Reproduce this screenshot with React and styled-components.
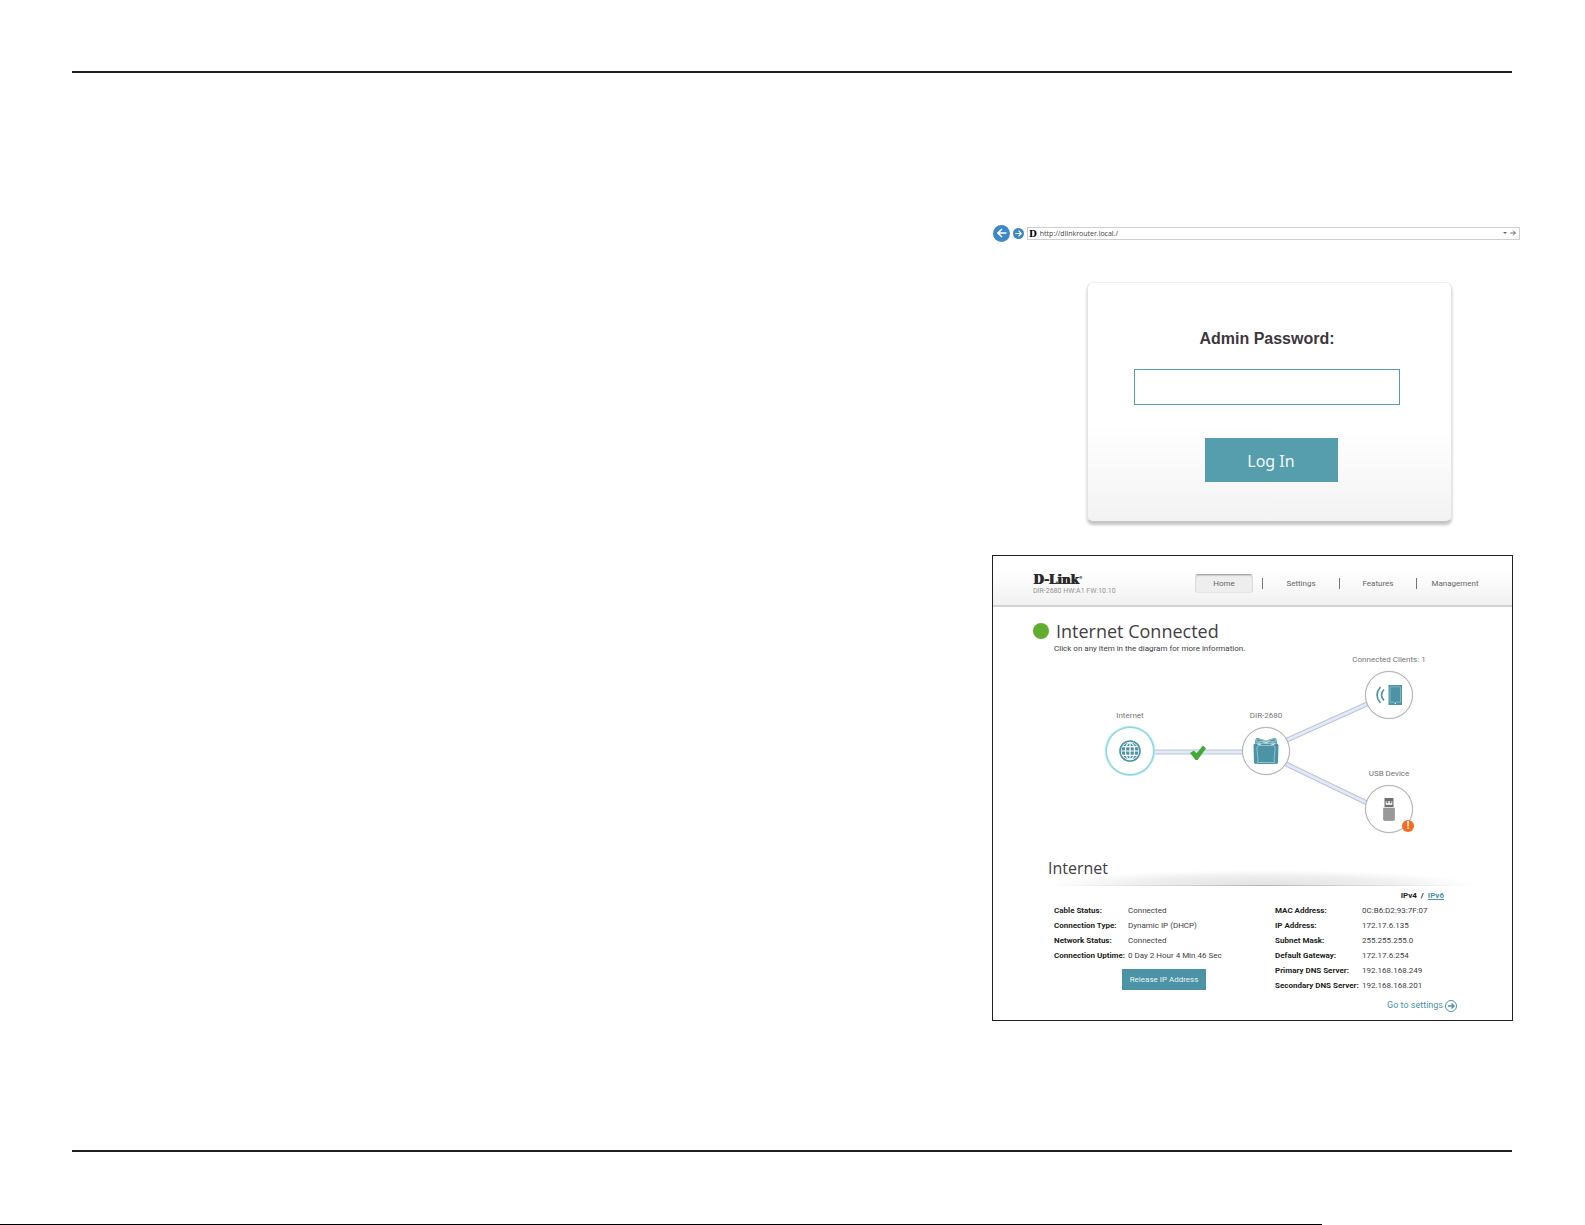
import React from 'react';
import styled, { createGlobalStyle, css } from 'styled-components';

const colors = {
  teal: '#4b93a5',
  tealLight: '#569dad',
  ink: '#231f20',
  text: '#454045',
  muted: '#77757a',
  edge: '#e3e9f5',
  edgeLine: '#bcc5de',
};

const GlobalStyle = createGlobalStyle`
  *, *::before, *::after {
    box-sizing: border-box;
  }

  body {
    margin: 0;
    background: #fff;
    color: ${colors.text};
    font-family: Roboto, 'Liberation Sans', sans-serif;
    font-size: 8px;
  }

  button, input {
    font: inherit;
    color: inherit;
  }
`;

const Sheet = styled.div`
  display: flex;
  flex-direction: column;
  min-height: 100vh;
  padding-top: 71px;
`;

const Rule = styled.hr`
  height: 2px;
  margin: 0 73px 0 72px;
  border: 0;
  background: ${colors.ink};
`;

const Content = styled.main`
  flex: 1;
  display: flex;
  flex-direction: column;
  align-items: flex-end;
  padding: 151px 65px 40px;
`;

const Figures = styled.div`
  display: flex;
  flex-direction: column;
  width: 100%;
  max-width: 528px;
`;

const PageEdge = styled.footer`
  display: flex;
  height: 1px;
  margin-top: 72px;
`;

const EdgeLine = styled.div`
  width: 83.4%;
  background: #000;
`;

/* Address bar */

const AddressBar = styled.form`
  display: flex;
  align-items: center;
  gap: 3px;
  height: 18px;
  padding-left: 1px;
`;

const RoundButton = styled.button`
  display: grid;
  flex: none;
  place-items: center;
  width: ${({ $size }) => $size}px;
  height: ${({ $size }) => $size}px;
  padding: 0;
  border: 0;
  border-radius: 50%;
  background: #3b87c8;
  color: #fff;
`;

const UrlBox = styled.div`
  flex: 1;
  display: flex;
  align-items: center;
  gap: 3px;
  height: 13px;
  padding: 0 3px 0 1px;
  border: 1px solid #d0d0d0;
`;

const Favicon = styled.span`
  padding-top: 2px;
  color: #000;
  font: 900 9px/9px 'DejaVu Serif', serif;
`;

const UrlInput = styled.input`
  flex: 1;
  min-width: 0;
  height: 11px;
  padding: 0;
  border: 0;
  outline: 0;
  background: none;
  font: 7px/11px 'Open Sans', sans-serif;
`;

const PlainButton = styled.button`
  display: flex;
  padding: 0;
  border: 0;
  background: none;
  color: #666;
`;

/* Login card */

const LoginCard = styled.form`
  display: flex;
  flex-direction: column;
  align-items: center;
  width: 365px;
  max-width: 100%;
  margin: 40px 0 33px 95px;
  padding: 46px 5px 39px 0;
  border: 1px solid #e4e4e4;
  border-top-color: #f0f0f0;
  border-bottom-color: #c4c4c4;
  border-radius: 6px;
  background: linear-gradient(#fff 60%, #f3f3f3);
  box-shadow: 0 3px 3px #c4c4c4;
`;

const LoginLabel = styled.label`
  margin-bottom: 20px;
  color: #3d383d;
  font: bold 16px/20px 'Liberation Sans', Arial, sans-serif;
`;

const PasswordInput = styled.input`
  width: 266px;
  height: 36px;
  margin-bottom: 33px;
  padding: 0 8px;
  border: 1px solid ${colors.tealLight};
  outline: 0;
  background: #fff;
  font-size: 16px;
`;

const LoginButton = styled.button`
  width: 133px;
  height: 44px;
  margin-left: 8px;
  padding: 2px 0 0;
  border: 0;
  background: ${colors.tealLight};
  color: #f2f8f9;
  font: 16px/24px 'Noto Sans', sans-serif;
`;

/* Router panel */

const Panel = styled.section`
  margin: 0 7px 0 0;
  border: 1px solid ${colors.ink};
  background: #fff;
`;

const PanelHeader = styled.header`
  display: flex;
  align-items: flex-start;
  justify-content: space-between;
  height: 51px;
  padding: 17px 19px 0 40px;
  border-bottom: 2px solid #d3d3d3;
  background: linear-gradient(#fff 30%, #f1f1f1);
`;

const Brand = styled.div`
  color: #949494;
  font-size: 7px;
  line-height: 8px;
`;

const Logo = styled.div`
  color: #2c292b;
  font: 900 12px/14px 'DejaVu Serif', serif;
  text-shadow: 1px 0 currentColor;
`;

const Trademark = styled.sup`
  font-size: 4px;
  line-height: 4px;
  text-shadow: none;
`;

const Nav = styled.nav`
  display: flex;
  align-items: center;
  height: 20px;
`;

const NavCell = styled.div`
  display: flex;
  justify-content: center;
  width: 76px;
`;

const NavDivider = styled.span`
  width: 1px;
  height: 11px;
  background: #777;
`;

const NavLink = styled.a`
  width: 58px;
  height: 19px;
  border: 1px solid transparent;
  border-radius: 3px;
  color: #666;
  line-height: 17px;
  text-align: center;
  text-decoration: none;

  ${({ $active }) =>
    $active &&
    css`
      border-color: #a5a5a5 #dcdcdc #e6e6e6;
      background: #eee;
      box-shadow: inset 0 1px 1px #ccc;
    `}
`;

const StatusHead = styled.div`
  display: grid;
  grid-template-columns: 16px 1fr;
  column-gap: 7px;
  align-items: center;
  padding: 12px 40px 0;
`;

const StatusDot = styled.span`
  width: 16px;
  height: 16px;
  border-radius: 50%;
  background: #5fae30;
`;

const Title = styled.h1`
  margin: 0;
  color: ${colors.text};
  font: 18px/24px 'Open Sans', sans-serif;
`;

const Hint = styled.p`
  grid-column: 1 / -1;
  margin: 0 0 0 21px;
  line-height: 12px;
`;

/* Network map: the nodes sit freely on a canvas */

const Map = styled.div`
  position: relative;
  width: 519px;
  height: 202px;
`;

const MapEdges = styled.svg`
  display: block;
`;

const Node = styled.button`
  position: absolute;
  left: ${({ $x }) => $x - 40}px;
  top: ${({ $y }) => $y - 40}px;
  display: flex;
  flex-direction: column;
  align-items: center;
  gap: 6px;
  width: 80px;
  padding: 0;
  border: 0;
  background: none;
`;

const NodeLabel = styled.span`
  color: ${colors.muted};
  line-height: 10px;
  white-space: nowrap;
`;

const NodeCircle = styled.span`
  position: relative;
  display: grid;
  place-items: center;
  width: 48px;
  height: 48px;
  border: 1px solid #b5b5b5;
  border-radius: 50%;
  background: #fff;
  box-shadow: 0 0 1px #bbb;

  ${({ $selected }) =>
    $selected &&
    css`
      border-color: #84d5e4;
      box-shadow: 0 0 1px 1px #9bdde9;
    `}
`;

const WarningBadge = styled.span`
  position: absolute;
  right: -2px;
  bottom: 0;
  width: 12px;
  height: 12px;
  border-radius: 50%;
  background: #f36c1f;
  color: #fff;
  font-weight: bold;
  font-size: 10px;
  line-height: 12px;
  text-align: center;
`;

/* Details */

const Details = styled.section`
  padding: 0 37px 8px 55px;
`;

const SectionTitle = styled.h2`
  height: 29px;
  margin: 0;
  border-bottom: 1px solid;
  border-image: linear-gradient(90deg, transparent, #b5b5b5 50%, transparent) 1;
  background: radial-gradient(ellipse 50% 15px at 50% 100%, #e2e2e2, #efefef 60%, transparent);
  color: ${colors.text};
  font: 16px/23px 'Open Sans', sans-serif;
`;

const IpSwitch = styled.div`
  display: flex;
  justify-content: flex-end;
  gap: 4px;
  margin: 5px 31px 2px 0;
  color: ${colors.ink};
  font-weight: bold;
  line-height: 10px;
`;

const Link = styled.a`
  color: ${colors.teal};
`;

const Columns = styled.div`
  display: grid;
  grid-template-columns: 221px 1fr;
  padding-left: 6px;
`;

const InfoTable = styled.table`
  border-collapse: collapse;

  th, td {
    height: 15px;
    padding: 0;
    line-height: 10px;
    text-align: left;
    white-space: nowrap;
  }

  th {
    width: ${({ $labelWidth }) => $labelWidth}px;
    color: ${colors.ink};
    font-weight: bold;
  }
`;

const ReleaseButton = styled.button`
  width: 84px;
  height: 21px;
  margin: 6px 0 0 68px;
  padding: 0;
  border: 0;
  background: ${colors.teal};
  color: #e8f3f5;
`;

const SettingsLink = styled(Link)`
  display: flex;
  align-items: center;
  justify-content: flex-end;
  gap: 2px;
  margin: 6px 18px 0 0;
  font-size: 9px;
  line-height: 13px;
  text-decoration: none;
`;

function Arrow({ size, left }) {
  return (
    <svg width={size} height={size} viewBox="0 0 10 10" fill="none" stroke="currentColor" strokeWidth="1.6">
      <path d={left ? 'M9.5 5H1M5 1L1 5l4 4' : 'M.5 5H9M5 1l4 4-4 4'} />
    </svg>
  );
}

function GlobeIcon() {
  return (
    <svg width="22" height="22" viewBox="0 0 22 22" fill="none" stroke={colors.teal}>
      <circle cx="11" cy="11" r="10" strokeWidth="1.6" />
      <circle cx="11" cy="11" r="8.4" fill={colors.teal} stroke="none" />
      <g stroke="#fff" strokeWidth="1.2">
        <ellipse cx="11" cy="11" rx="4.600" ry="8.400" />
        <path d="M11 2.500v17M2.500 11h17M4 6.700h14M4 15.300h14" />
      </g>
    </svg>
  );
}

function RouterIcon() {
  return (
    <svg width="26" height="28" viewBox="0 0 26 28">
      <path
        fill={colors.teal}
        d="M2.500 6.500h21q2 0 2 2L25 25.500q-.2 1.500-2 1.500H3q-1.800 0-2-1.500L.500 8.500q0-2 2-2zM13 3.500L5 1Q2.500.5 2.500 2.500L2 6l4 2 7-3 7 3 4-2-.5-3.500Q23.500.5 21 1z"
      />
      <g fill="none" stroke="#a5cdd6" strokeWidth=".8">
        <path d="M3.500 27Q5 26 5 22L3.800 11q.2-2.500 3-2.500h12.400q2.800 0 3 2.500L21 22q0 4 1.500 5M5 25.500h16" />
        <path d="M13 4L5 1.800q-2.500 0-1.500 3L13 4l9.500.8q1-3-1.500-3zM12 4.500L6.500 8M14 4.500L19.500 8M3 6.500q5-2 9-2.300M23 6.500q-5-2-9-2.300" />
      </g>
    </svg>
  );
}

function ClientsIcon() {
  return (
    <svg width="26" height="20" viewBox="0 0 26 20">
      <g fill="none" stroke={colors.teal} strokeWidth="1.600">
        <path d="M4.500 2Q-2.500 10 4.500 18M8 4.500q-5 5.500 0 11" />
      </g>
      <path fill={colors.teal} d="M12.500 0H26v20H12.500z" />
      <path fill="none" stroke="#a5cdd6" strokeWidth=".6" d="M14 1.800h10.500v15.400H14z" />
      <circle cx="19.300" cy="18.600" r=".7" fill="#fff" />
    </svg>
  );
}

function UsbIcon() {
  return (
    <svg width="12" height="23" viewBox="0 0 12 23">
      <path fill="#6f6f6f" d="M1.500 0h9v9h-9z" />
      <path fill="#fff" d="M2.700 3.200h6.600v3.600H2.700z" />
      <path fill="#6f6f6f" d="M3.500 3.200h1.800v2H3.500zM6.700 3.200h1.800v2H6.700z" />
      <path fill="#999" stroke="#8a8a8a" strokeWidth=".6" d="M.500 10h11v11.500q0 1-1 1h-9q-1 0-1-1z" />
    </svg>
  );
}

const edges = [
  'M162 97H249',
  'M294 85L374 49',
  'M293 109L374 148',
];

const nodes = [
  { label: 'Internet', x: 137, y: 96, icon: <GlobeIcon />, selected: true },
  { label: 'DIR-2680', x: 273, y: 96, icon: <RouterIcon /> },
  { label: 'Connected Clients: 1', x: 396, y: 40, icon: <ClientsIcon /> },
  { label: 'USB Device', x: 396, y: 154, icon: <UsbIcon />, warning: true },
];

const navItems = ['Home', 'Settings', 'Features', 'Management'];

const connectionInfo = [
  ['Cable Status:', 'Connected'],
  ['Connection Type:', 'Dynamic IP (DHCP)'],
  ['Network Status:', 'Connected'],
  ['Connection Uptime:', '0 Day 2 Hour 4 Min 46 Sec'],
];

const addressInfo = [
  ['MAC Address:', '0C:B6:D2:93:7F:07'],
  ['IP Address:', '172.17.6.135'],
  ['Subnet Mask:', '255.255.255.0'],
  ['Default Gateway:', '172.17.6.254'],
  ['Primary DNS Server:', '192.168.168.249'],
  ['Secondary DNS Server:', '192.168.168.201'],
];

function NetworkMap() {
  return (
    <Map>
      <MapEdges width="519" height="202" viewBox="0 0 519 202" fill="none">
        {edges.map((d) => (
          <g key={d}>
            <path d={d} stroke={colors.edgeLine} strokeWidth="5" />
            <path d={d} stroke={colors.edge} strokeWidth="3" />
          </g>
        ))}
        <path d="M197 98l4 5 1.500 2h2L213 93.500l-3-3-6.500 8-2.500-3z" fill="#3fab30" />
      </MapEdges>
      {nodes.map(({ label, x, y, icon, selected, warning }) => (
        <Node key={label} type="button" $x={x} $y={y}>
          <NodeLabel>{label}</NodeLabel>
          <NodeCircle $selected={selected}>
            {icon}
            {warning && <WarningBadge>!</WarningBadge>}
          </NodeCircle>
        </Node>
      ))}
    </Map>
  );
}

function Info({ rows, labelWidth }) {
  return (
    <InfoTable $labelWidth={labelWidth}>
      <tbody>
        {rows.map(([name, value]) => (
          <tr key={name}>
            <th scope="row">{name}</th>
            <td>{value}</td>
          </tr>
        ))}
      </tbody>
    </InfoTable>
  );
}

export default function App() {
  return (
    <Sheet>
      <GlobalStyle />
      <Rule />
      <Content>
        <Figures>
          <AddressBar>
            <RoundButton type="button" $size={17} aria-label="Back">
              <Arrow size={10} left />
            </RoundButton>
            <RoundButton type="button" $size={11} aria-label="Forward">
              <Arrow size={7} />
            </RoundButton>
            <UrlBox>
              <Favicon>D</Favicon>
              <UrlInput aria-label="Address" defaultValue="http://dlinkrouter.local./" />
              <PlainButton type="button" aria-label="History">
                <svg width="4" height="2" viewBox="0 0 4 2" fill="currentColor">
                  <path d="M0 0h4L2 2z" />
                </svg>
              </PlainButton>
              <PlainButton type="button" aria-label="Go">
                <Arrow size={6} />
              </PlainButton>
            </UrlBox>
          </AddressBar>

          <LoginCard>
            <LoginLabel htmlFor="password">Admin Password:</LoginLabel>
            <PasswordInput id="password" type="password" />
            <LoginButton type="button">Log In</LoginButton>
          </LoginCard>

          <Panel>
            <PanelHeader>
              <Brand>
                <Logo>
                  D-Link<Trademark>®</Trademark>
                </Logo>
                DIR-2680 HW:A1 FW:10.10
              </Brand>
              <Nav>
                {navItems.map((item, i) => (
                  <React.Fragment key={item}>
                    {i > 0 && <NavDivider />}
                    <NavCell>
                      <NavLink href="#" $active={i === 0}>
                        {item}
                      </NavLink>
                    </NavCell>
                  </React.Fragment>
                ))}
              </Nav>
            </PanelHeader>

            <StatusHead>
              <StatusDot />
              <Title>Internet Connected</Title>
              <Hint>Click on any item in the diagram for more information.</Hint>
            </StatusHead>
            <NetworkMap />

            <Details>
              <SectionTitle>Internet</SectionTitle>
              <IpSwitch>
                <span>IPv4</span>
                <span>/</span>
                <Link href="#">IPv6</Link>
              </IpSwitch>
              <Columns>
                <div>
                  <Info rows={connectionInfo} labelWidth={74} />
                  <ReleaseButton type="button">Release IP Address</ReleaseButton>
                </div>
                <div>
                  <Info rows={addressInfo} labelWidth={87} />
                  <SettingsLink href="#">
                    Go to settings
                    <svg width="12" height="12" viewBox="0 0 12 12" fill="none" stroke="currentColor">
                      <circle cx="6" cy="6" r="5.500" />
                      <path d="M3 6h6M6.500 3.500L9 6 6.500 8.500" strokeWidth="1.400" />
                    </svg>
                  </SettingsLink>
                </div>
              </Columns>
            </Details>
          </Panel>
        </Figures>
      </Content>
      <Rule />
      <PageEdge>
        <EdgeLine />
      </PageEdge>
    </Sheet>
  );
}
